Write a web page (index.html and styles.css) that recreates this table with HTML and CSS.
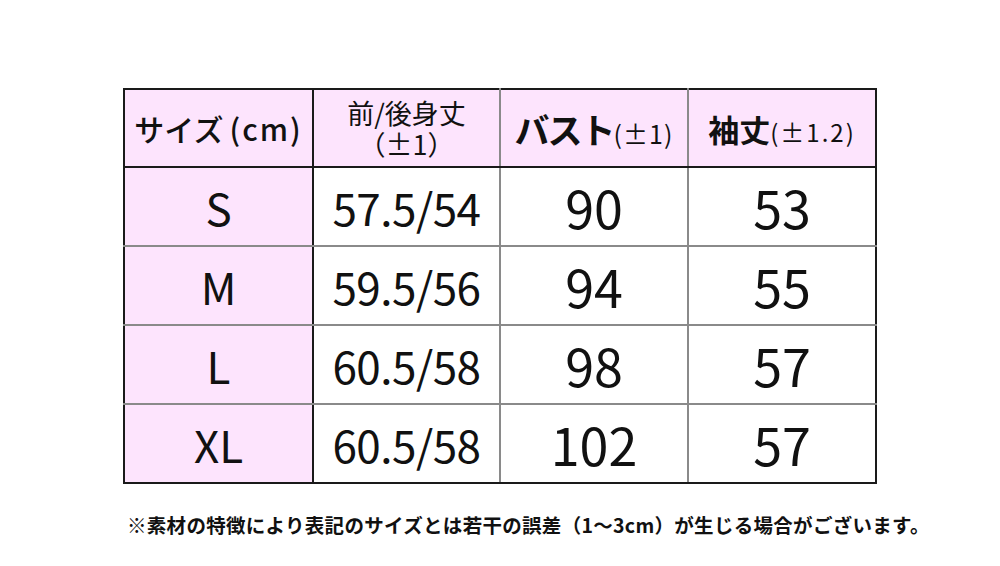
FILE: index.html
```html
<!DOCTYPE html>
<html lang="ja">
<head>
<meta charset="utf-8">
<link rel="stylesheet" href="styles.css">
</head>
<body>
<main class="page">
  <table class="size-table">
    <colgroup>
      <col class="c1"><col class="c2"><col class="c3"><col class="c4">
    </colgroup>
    <thead>
      <tr class="head">
        <th class="first"><span class="h-size">サイズ<span class="h-unit">(cm)</span></span></th>
        <th class="h-length"><p class="h-line">前/後身丈<br>（±1）</p></th>
        <th><span class="h-bust">バスト</span><span class="h-tol">(±1)</span></th>
        <th class="last"><span class="h-sleeve">袖丈</span><span class="h-tol2">(±1.2)</span></th>
      </tr>
    </thead>
    <tbody>
      <tr><td class="first size">S</td><td class="len">57.5/54</td><td class="num">90</td><td class="num last">53</td></tr>
      <tr><td class="first size">M</td><td class="len">59.5/56</td><td class="num">94</td><td class="num last">55</td></tr>
      <tr><td class="first size">L</td><td class="len">60.5/58</td><td class="num">98</td><td class="num last">57</td></tr>
      <tr><td class="first size">XL</td><td class="len">60.5/58</td><td class="num">102</td><td class="num last">57</td></tr>
    </tbody>
  </table>
  <p class="note">※素材の特徴により表記のサイズとは若干の誤差（1～3cm）が生じる場合がございます。</p>
</main>
</body>
</html>
```
FILE: styles.css
```css
html, body {
  margin: 0;
  padding: 0;
  background: #ffffff;
}
body {
  width: 1000px;
  height: 566px;
  overflow: hidden;
  font-family: "Noto Sans CJK JP", "Noto Sans", sans-serif;
  color: #111111;
}
.page {
  padding: 88px 0 0 123px;
}
.size-table {
  border-collapse: collapse;
  table-layout: fixed;
  width: 753px;
  border: 2px solid #1a1a1a;
}
.c1 { width: 189px; }
.c2 { width: 187px; }
.c3 { width: 188px; }
.c4 { width: 188px; }
.size-table th,
.size-table td {
  padding: 0;
  text-align: center;
  vertical-align: middle;
  border: 2px solid #8a8a8a;
}
.head th {
  height: 76px;
  background: #fde4fd;
  font-weight: normal;
  border-top: 2px solid #1a1a1a;
  border-bottom: 2px solid #1a1a1a;
  line-height: 1;
}
.size-table .first {
  background: #fde4fd;
  border-right: 2px solid #1a1a1a;
  border-left: 2px solid #1a1a1a;
}
.size-table .last {
  border-right: 2px solid #1a1a1a;
}
.size-table tbody td {
  height: 77px;
}
.size-table tbody tr:last-child td {
  border-bottom: 2px solid #1a1a1a;
}
.h-size {
  font-size: 30px;
  font-weight: 500;
}
.h-unit {
  margin-left: 6px;
  letter-spacing: 2px;
}
.h-line {
  margin: 0;
  font-size: 27px;
  line-height: 31px;
}
.h-bust {
  font-size: 35px;
  font-weight: 700;
  letter-spacing: -2px;
}
.h-tol {
  font-size: 25px;
  letter-spacing: 1px;
}
.h-sleeve {
  font-size: 31px;
  font-weight: 700;
}
.h-tol2 {
  font-size: 24px;
  letter-spacing: 2px;
}
.size {
  font-size: 44px;
  padding-top: 6px;
}
.len {
  font-size: 44px;
  letter-spacing: -0.5px;
}
.num {
  font-size: 52px;
}
.note {
  margin: 26px 0 0 4px;
  font-size: 19.5px;
  font-weight: 700;
  letter-spacing: 0.3px;
}
```
